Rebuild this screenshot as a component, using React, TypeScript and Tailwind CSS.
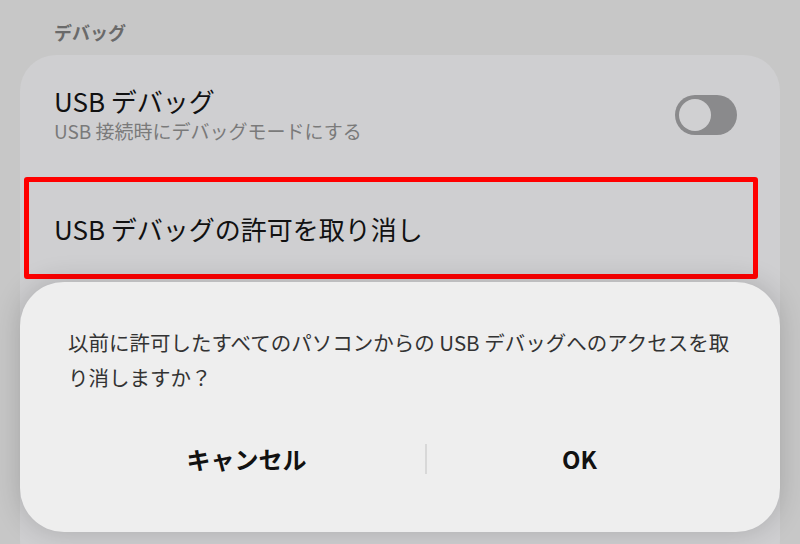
import React from 'react';

const jp = { fontFamily: '"Noto Sans CJK JP", "Noto Sans", sans-serif' };

function Toggle() {
  return (
    <div className="relative w-[62px] h-[40px] rounded-full bg-[#8a8a8c] shrink-0">
      <div className="absolute left-[4px] top-[4px] w-[32px] h-[32px] rounded-full bg-[#d0d0d2]" />
    </div>
  );
}

export default function App() {
  return (
    <div style={jp} className="relative w-[800px] h-[544px] overflow-hidden bg-[#c7c7c7]">
      {/* section header */}
      <div className="pl-[54px] pt-[20px] h-[55px]">
        <p className="text-[18px] leading-[24px] font-bold text-[#6a6a6a]">デバッグ</p>
      </div>

      {/* settings card */}
      <div className="mx-[20px] h-[520px] rounded-[36px] bg-[#cfcfd1]">
        <div className="flex justify-between pl-[34px] pr-[43px] pt-[30px] h-[122px]">
          <div className="flex flex-col">
            <p className="text-[26px] leading-[32px] text-[#111111]">USB デバッグ</p>
            <p className="text-[19px] leading-[24px] text-[#7a7a7a] mt-[2px]">USB 接続時にデバッグモードにする</p>
          </div>
          <div className="mt-[10px]">
            <Toggle />
          </div>
        </div>

        <div className="ml-[4px] w-[734px] h-[102px] flex items-center pl-[25px] pt-[2px] border-[5px] border-[#ff0000] rounded-[3px]">
          <p className="text-[26px] leading-[32px] text-[#111111]">USB デバッグの許可を取り消し</p>
        </div>
      </div>

      {/* confirm dialog */}
      <div className="absolute left-[20px] top-[282px] w-[760px] h-[250px] rounded-[44px] bg-[#eeeeee] shadow-[0_0_28px_rgba(0,0,0,0.18)] px-[48px] pt-[43px]">
        <p className="text-[20.5px] leading-[35px] text-[#333333]">
          以前に許可したすべてのパソコンからの USB デバッグへのアクセスを取<br />り消しますか？
        </p>
        <div className="flex items-center mt-[40px] h-[48px]">
          <button className="w-[358px] text-[24px] font-bold text-[#111111]">キャンセル</button>
          <div className="w-[2px] h-[30px] bg-[#d8d8d8]" />
          <button className="w-[306px] text-[24px] font-bold text-[#111111]">OK</button>
        </div>
      </div>
    </div>
  );
}
